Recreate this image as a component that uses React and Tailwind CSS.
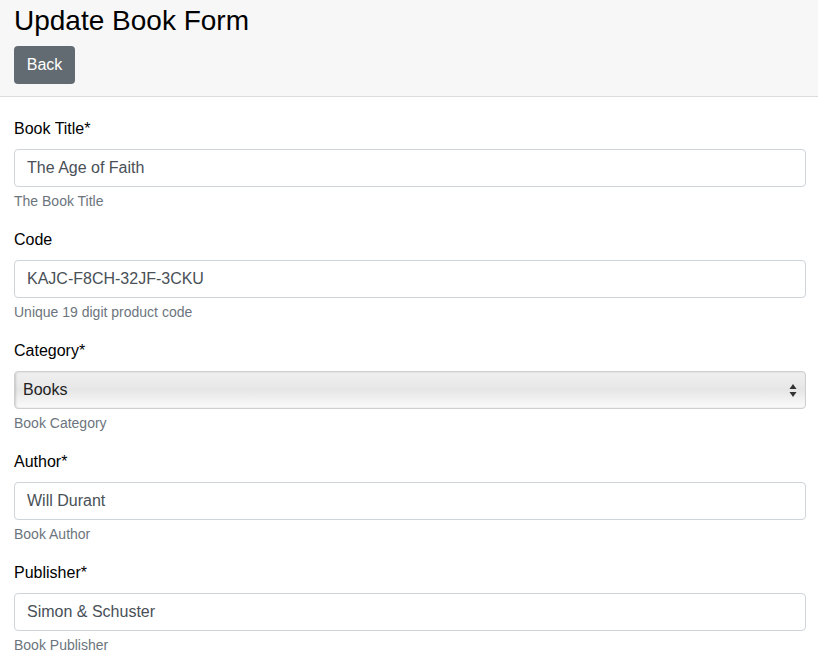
import React from "react";

const font = { fontFamily: '"Liberation Sans", Arial, Helvetica, sans-serif' };

function Field({ label, help, children }) {
  return (
    <div className="mb-[17px]">
      <label className="block text-[16px] leading-[24px] text-black mb-2">{label}</label>
      {children}
      <div className="mt-1 text-[14px] leading-[20px] text-[#6c757d] h-[20px]">{help}</div>
    </div>
  );
}

function TextInput({ value }) {
  return (
    <input
      readOnly
      value={value}
      className="block w-full h-[38px] px-3 border border-[#ced4da] rounded-[4px] bg-white text-[16px] text-[#495057] outline-none"
      style={font}
    />
  );
}

export default function App() {
  return (
    <div className="w-[818px] h-[672px] bg-white overflow-hidden" style={font}>
      <div className="bg-[#f7f7f7] border-b border-[#dcdcdc] h-[97px] px-[14px] pt-[4px]">
        <h1 className="text-[28px] leading-[34px] text-black font-normal">Update Book Form</h1>
        <button className="mt-[8px] h-[38px] w-[61px] rounded-[4px] bg-[#636b72] text-white text-[16px]">Back</button>
      </div>
      <div className="px-[14px] pt-[20px] pr-[12px]">
        <Field label="Book Title*" help="The Book Title">
          <TextInput value="The Age of Faith" />
        </Field>
        <Field label="Code" help="Unique 19 digit product code">
          <TextInput value="KAJC-F8CH-32JF-3CKU" />
        </Field>
        <Field label="Category*" help="Book Category">
          <div className="relative h-[38px] rounded-[4px] border border-[#cfcfcf] bg-gradient-to-b from-[#f0f0f0] via-[#e6e6e6] to-[#fbfbfb] shadow-[inset_1px_0_2px_rgba(0,0,0,0.15)] flex items-center px-2">
            <span className="text-[16px] text-[#222]">Books</span>
            <svg className="absolute right-[8px] top-[11px]" width="8" height="15" viewBox="0 0 8 15">
              <path d="M4 1 L7.5 6 L0.5 6 Z" fill="#333" />
              <path d="M4 14 L7.5 9 L0.5 9 Z" fill="#333" />
            </svg>
          </div>
        </Field>
        <Field label="Author*" help="Book Author">
          <TextInput value="Will Durant" />
        </Field>
        <Field label="Publisher*" help="Book Publisher">
          <TextInput value="Simon & Schuster" />
        </Field>
      </div>
    </div>
  );
}
